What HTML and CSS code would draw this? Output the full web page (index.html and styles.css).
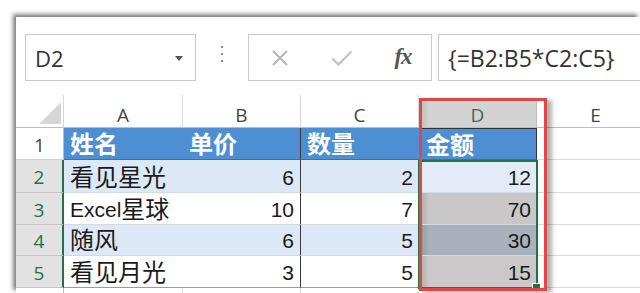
FILE: index.html
```html
<!DOCTYPE html>
<html lang="zh-CN">
<head>
<meta charset="utf-8">
<title>Excel 数组公式</title>
<link rel="stylesheet" href="styles.css">
</head>
<body>
<div class="window">
  <div class="fbar">
    <div class="namebox">
      <span class="ref">D2</span>
      <svg class="caret" width="8" height="5" viewBox="0 0 8 5"><path d="M0 0H8L4 5Z" fill="#555"/></svg>
    </div>
    <div class="grip"><i></i><i></i><i></i></div>
    <div class="tools">
      <span class="tool"><svg width="18" height="16" viewBox="0 0 18 16"><path d="M2 1L16 15M16 1L2 15" stroke="#b5b5b5" stroke-width="2" fill="none"/></svg></span>
      <span class="tool"><svg width="22" height="16" viewBox="0 0 22 16"><path d="M1.5 8.5L7.5 14.5L20.5 1.5" stroke="#c4c4c4" stroke-width="2.4" fill="none"/></svg></span>
      <span class="tool fx">fx</span>
    </div>
    <div class="formula">{=B2:B5*C2:C5}</div>
  </div>

  <div class="sheet">
    <div class="corner"><svg width="22" height="22" viewBox="0 0 22 22"><path d="M22 0V22H0Z" fill="#d6d6d6"/></svg></div>
    <div class="ch">A</div>
    <div class="ch">B</div>
    <div class="ch">C</div>
    <div class="ch sel">D</div>
    <div class="ch">E</div>

    <div class="rh">1</div>
    <div class="c hd"><span class="zh">姓名</span></div>
    <div class="c hd colb"><span class="zh">单价</span></div>
    <div class="c hd"><span class="zh">数量</span></div>
    <div class="c hd dh"><span class="zh">金额</span></div>
    <div class="c e"></div>

    <div class="rh on">2</div>
    <div class="c band"><span class="zh">看见星光</span></div>
    <div class="c band num colb">6</div>
    <div class="c band num">2</div>
    <div class="c num d2">12</div>
    <div class="c e"></div>

    <div class="rh on">3</div>
    <div class="c">Excel<span class="zh">星球</span></div>
    <div class="c num colb">10</div>
    <div class="c num">7</div>
    <div class="c num d3">70</div>
    <div class="c e"></div>

    <div class="rh on">4</div>
    <div class="c band r4"><span class="zh">随风</span></div>
    <div class="c band num colb r4">6</div>
    <div class="c band num r4">5</div>
    <div class="c num d4 r4">30</div>
    <div class="c e"></div>

    <div class="rh on">5</div>
    <div class="c last"><span class="zh">看见月光</span></div>
    <div class="c last num colb">3</div>
    <div class="c last num">5</div>
    <div class="c last num d5">15</div>
    <div class="c e"></div>

    <div class="rh"></div>
    <div class="c e"></div>
    <div class="c e"></div>
    <div class="c e"></div>
    <div class="c e"></div>
    <div class="c e"></div>

    <div class="selection"><span class="handle"></span></div>
    <div class="mark"></div>
  </div>
</div>
</body>
</html>
```
FILE: styles.css
```css
html, body {
  margin: 0;
  padding: 0;
  background: #fff;
  overflow: hidden;
}
body {
  width: 640px;
  height: 293px;
  font-family: "Open Sans", "Noto Sans", sans-serif;
}
.window {
  margin: 17px 0 0 16px;
  width: 624px;
  height: 276px;
  overflow: hidden;
  background: #fff;
  box-shadow: -3px -3px 4px rgba(0, 0, 0, 0.5);
}

/* formula bar */
.fbar {
  box-sizing: border-box;
  height: 78px;
  padding: 17px 0 0 9px;
  display: flex;
  align-items: flex-start;
}
.namebox {
  box-sizing: border-box;
  flex: none;
  width: 171px;
  height: 47px;
  border: 1px solid #c9c9c9;
  display: flex;
  align-items: center;
  justify-content: space-between;
  padding: 0 12px 0 9px;
}
.ref {
  font-size: 22px;
  color: #333;
}
.caret {
  margin-top: 1px;
}
.grip {
  flex: none;
  width: 52px;
  height: 47px;
  display: flex;
  flex-direction: column;
  align-items: center;
  justify-content: center;
  gap: 5px;
  margin-top: -4px;
}
.grip i {
  display: block;
  width: 2px;
  height: 2px;
  background: #8a8a8a;
}
.tools {
  box-sizing: border-box;
  flex: none;
  width: 184px;
  height: 47px;
  border: 1px solid #c9c9c9;
  display: grid;
  grid-template-columns: 62px 62px 60px;
  align-items: center;
}
.tool {
  display: flex;
  justify-content: center;
  align-items: center;
}
.fx {
  font-family: "Liberation Serif", "DejaVu Serif", serif;
  font-style: italic;
  font-weight: bold;
  font-size: 23px;
  color: #555;
  letter-spacing: -1px;
  margin-top: -2px;
}
.formula {
  box-sizing: border-box;
  margin-left: 6px;
  flex: none;
  width: 220px;
  height: 47px;
  border: 1px solid #c9c9c9;
  padding-left: 9px;
  display: flex;
  align-items: center;
  font-size: 23px;
  color: #333;
  white-space: nowrap;
}

/* sheet */
.sheet {
  position: relative;
  display: grid;
  grid-template-columns: 48px 119px 118px 118px 118px 118px;
  grid-template-rows: 33px 32px 33px 32px 31px 32px 20px;
}
.sheet > div {
  box-sizing: border-box;
}
.corner {
  display: flex;
  align-items: flex-end;
  justify-content: flex-end;
  padding: 0 2px 3px 0;
  border-bottom: 1px solid #bdbdbd;
  border-right: 1px solid #d6d6d6;
}
.ch {
  display: flex;
  align-items: center;
  justify-content: center;
  font-size: 19px;
  color: #444;
  padding-top: 7px;
  border-bottom: 1px solid #bdbdbd;
  border-right: 1px solid #dadada;
}
.ch.sel {
  background: linear-gradient(to right, #b9b9b9, #d3d3d3 10px, #d3d3d3);
  color: #3f6a52;
  margin-top: 5px;
  padding-top: 2px;
  border-right: 1px solid #bdbdbd;
}
.rh {
  display: flex;
  align-items: center;
  justify-content: center;
  font-size: 19px;
  color: #444;
  padding-top: 2px;
  border-bottom: 1px solid #cfcfcf;
  border-right: 1px solid #bdbdbd;
}
.rh.on {
  background: #e2e2e2;
  color: #217346;
  border-right: 2px solid #217346;
  border-bottom-color: #c4c4c4;
}
.c {
  display: flex;
  align-items: center;
  padding: 3px 6px 0 6px;
  font-family: "Liberation Sans", "Noto Sans CJK SC", sans-serif;
  font-size: 21px;
  line-height: 24px;
  color: #1a1a1a;
  border-bottom: 1px solid #d3dae2;
  white-space: nowrap;
}
.c.r4 {
  padding-top: 1px;
}
.zh {
  font-family: "Liberation Sans", "Noto Sans CJK SC", sans-serif;
  font-size: 24px;
  line-height: 24px;
}
.num {
  justify-content: flex-end;
}
.hd {
  background: #4e8fd3;
  color: #fff;
  font-weight: bold;
  border-bottom: 1px solid #3d6fa8;
}
.hd .zh {
  font-weight: bold;
}
.colb {
  border-right: 1px solid #3a3a3a;
}
.dh {
  border: 1px solid #333;
  border-bottom-color: #3d6fa8;
}
.band {
  background: #dce8f5;
}
.last {
  border-bottom: 1px solid #9c9c9c;
}
.d2 {
  background: #e3ecf6;
}
.d3 {
  background: linear-gradient(to right, #a9a7a7, #c9c7c7 10px, #c9c7c7);
}
.d4 {
  background: linear-gradient(to right, #8e97a1, #a9b2bc 10px, #a9b2bc);
}
.d5 {
  background: linear-gradient(to right, #aaa8a8, #cac8c8 10px, #cac8c8);
  border-bottom-color: #fff;
}
.e {
  border-right: 1px solid #d9d9d9;
  border-bottom: 1px solid #d9d9d9;
}

/* overlays */
.selection {
  position: absolute;
  left: 402px;
  top: 65px;
  width: 120px;
  height: 129px;
  border: 2px solid #217346;
  box-sizing: border-box;
}
.handle {
  position: absolute;
  right: -5px;
  bottom: -5px;
  width: 7px;
  height: 7px;
  background: #217346;
  border: 1px solid #fff;
}
.mark {
  position: absolute;
  left: 403px;
  top: 3px;
  width: 128px;
  height: 193px;
  border: 3px solid #dd4848;
  box-sizing: border-box;
  box-shadow: 5px 2px 4px rgba(0, 0, 0, 0.3);
}
```
